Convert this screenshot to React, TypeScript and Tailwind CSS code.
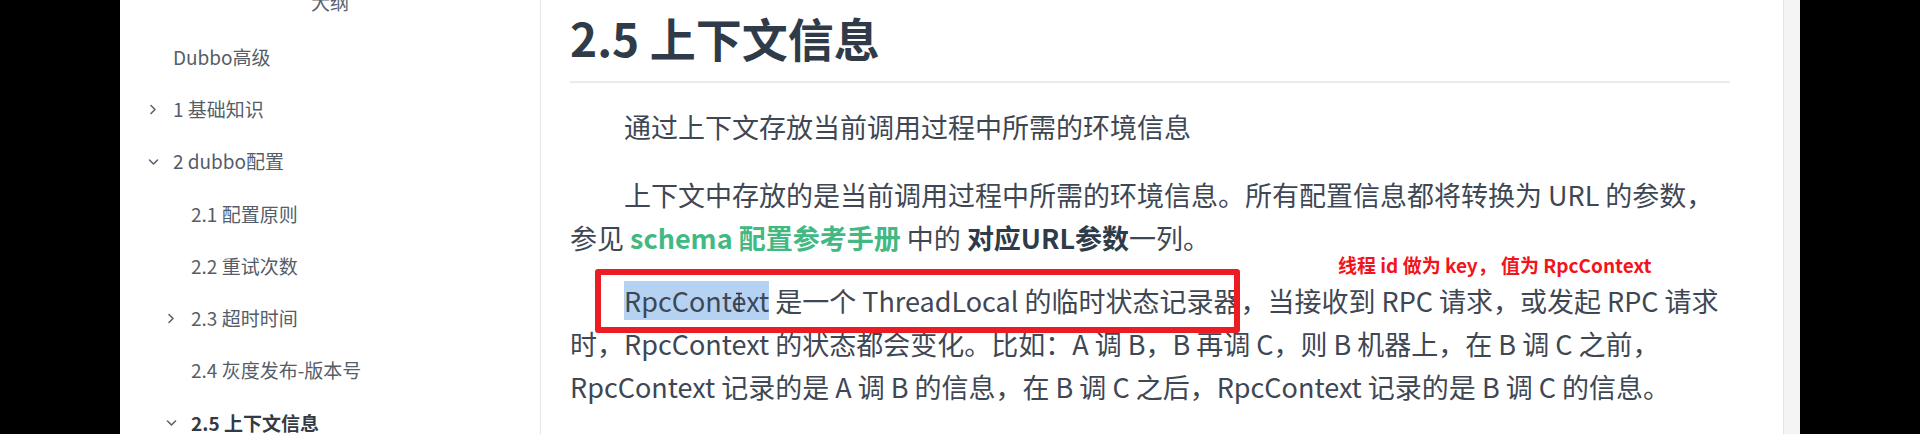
import React from 'react'

const font = { fontFamily: '"Noto Sans CJK SC", "Noto Sans", sans-serif' }

interface OutlineItem {
  label: string
  level: number
  arrow?: 'right' | 'down'
  active?: boolean
}

const outline: OutlineItem[] = [
  { label: 'Dubbo高级', level: 1 },
  { label: '1 基础知识', level: 1, arrow: 'right' },
  { label: '2 dubbo配置', level: 1, arrow: 'down' },
  { label: '2.1 配置原则', level: 2 },
  { label: '2.2 重试次数', level: 2 },
  { label: '2.3 超时时间', level: 2, arrow: 'right' },
  { label: '2.4 灰度发布-版本号', level: 2 },
  { label: '2.5 上下文信息', level: 2, arrow: 'down', active: true },
]

const Arrow = ({ dir }: { dir: 'right' | 'down' }) =>
  dir === 'right' ? (
    <svg width="8" height="11" viewBox="0 0 8 11" fill="none">
      <path d="M2 1.5 6 5.5 2 9.5" stroke="#5b636e" strokeWidth="1.6" strokeLinecap="round" strokeLinejoin="round" />
    </svg>
  ) : (
    <svg width="11" height="8" viewBox="0 0 11 8" fill="none">
      <path d="M1.5 2 5.5 6 9.5 2" stroke="#5b636e" strokeWidth="1.6" strokeLinecap="round" strokeLinejoin="round" />
    </svg>
  )

const Sidebar = () => (
  <div className="w-[421px] shrink-0 bg-white border-r border-[#e6e6e6] flex flex-col overflow-hidden">
    <div className="-mt-[27px] h-[58px] shrink-0 flex items-center justify-center text-[19px] text-[#5b636e]">
      大纲
    </div>
    {outline.map((item) => (
      <div
        key={item.label}
        className={
          'h-[52.25px] shrink-0 flex items-center ' + (item.level === 1 ? 'pl-[25px]' : 'pl-[43px]')
        }
      >
        <span className="w-[16px] flex justify-center">{item.arrow && <Arrow dir={item.arrow} />}</span>
        <span
          className={
            'ml-[12px] text-[19px] whitespace-nowrap ' +
            (item.active ? 'font-bold text-[#333a44]' : 'text-[#555d68]')
          }
        >
          {item.label}
        </span>
      </div>
    ))}
  </div>
)

const Content = () => (
  <div className="relative flex-1 bg-white pl-[29px]">
    <div className="w-[1160px] text-[#3e4753]">
      <h2 className="mt-[9px] pb-[16px] border-b-2 border-[#ebebeb] text-[46px] leading-[56px] font-bold text-[#2f3b48]">
        2.5 上下文信息
      </h2>
      <p className="mt-[22px] text-[27px] leading-[43px] indent-[54px]">通过上下文存放当前调用过程中所需的环境信息</p>
      <p className="mt-[25px] text-[27px] leading-[43px] indent-[54px]">
        上下文中存放的是当前调用过程中所需的环境信息。所有配置信息都将转换为 URL 的参数，参见{' '}
        <span className="font-bold text-[#42b983]">schema 配置参考手册</span> 中的{' '}
        <span className="font-bold text-[#2f3b48]">对应URL参数</span>一列。
      </p>
      <p className="mt-[20px] text-[27px] leading-[43px] indent-[54px]">
        <span className="relative bg-[#b5d2f3]">
          RpcContext
          <svg className="absolute left-[111px] top-[11px]" width="8" height="20" viewBox="0 0 8 20" fill="none">
            <path d="M1 1.5h6M1 18.5h6M4 1.5v17" stroke="#333" strokeWidth="1.4" />
          </svg>
        </span>{' '}
        是一个 ThreadLocal 的临时状态记录器，当接收到 RPC 请求，或发起 RPC 请求时，RpcContext 的状态都会变化。比如：A 调 B，B
        再调 C，则 B 机器上，在 B 调 C 之前，RpcContext 记录的是 A 调 B 的信息，在 B 调 C 之后，RpcContext 记录的是 B 调 C
        的信息。
      </p>
    </div>

    {/* screenshot markup drawn over the page */}
    <div className="absolute left-[54px] top-[269px] w-[645px] h-[64px] border-[6px] border-[#ec1c24] rounded-[3px]" />
    <div className="absolute left-[797px] top-[253px] text-[19px] leading-[24px] font-bold text-[#f2141c] whitespace-nowrap">
      线程 id 做为 key， 值为 RpcContext
    </div>
  </div>
)

const App = () => {
  return (
    <div className="flex w-[1920px] h-[434px] overflow-hidden bg-black" style={font}>
      <div className="w-[120px] shrink-0 bg-black" />
      <Sidebar />
      <Content />
      <div className="w-[17px] shrink-0 bg-[#f4f4f4] border-l border-[#e4e4e4]" />
      <div className="w-[120px] shrink-0 bg-black" />
    </div>
  )
}

export default App
